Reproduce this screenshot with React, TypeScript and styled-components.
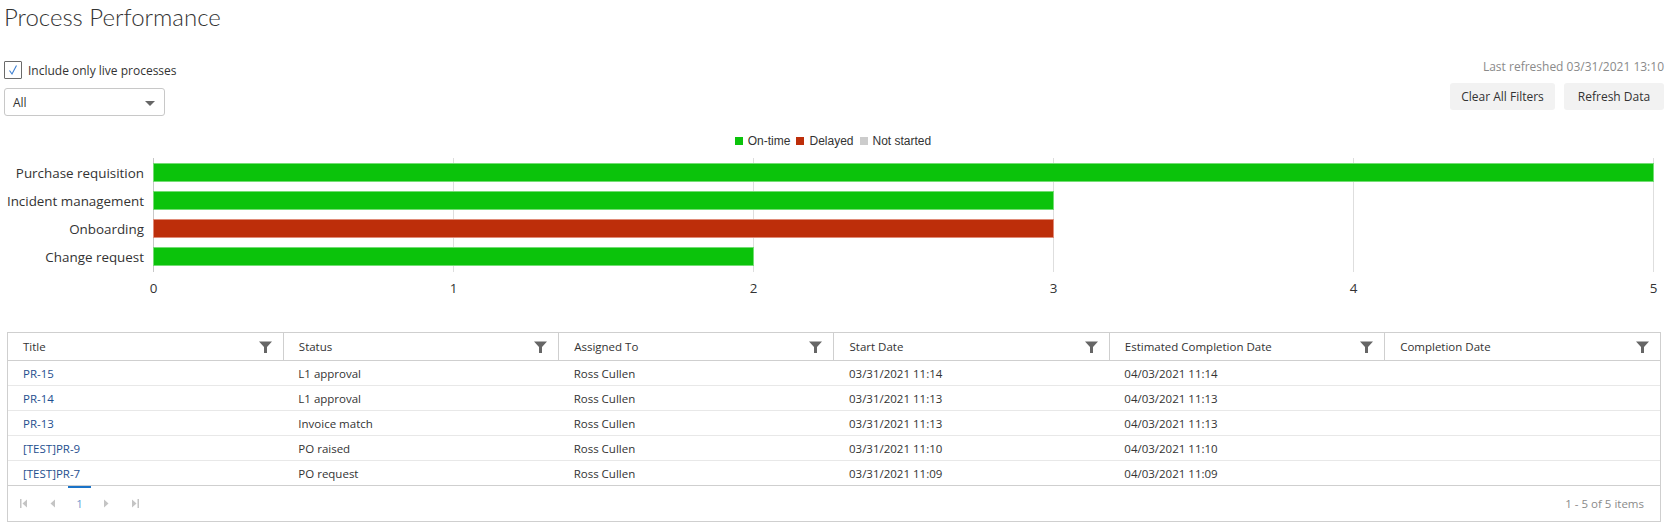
import styled, { createGlobalStyle } from 'styled-components';

const GlobalStyle = createGlobalStyle`
  body {
    margin: 0;
    background: #fff;
    font-family: "Segoe UI", "Open Sans", sans-serif;
    color: #333;
  }
`

const Page = styled.div`
  width: 1674px;
  box-sizing: border-box;
  padding: 0 10px 0 4px;
`

const Title = styled.h1`
  margin: 0;
  padding-top: 1px;
  font-family: "Lato", "Open Sans", sans-serif;
  font-weight: 300;
  font-size: 24px;
  line-height: 32px;
  color: #333;
  height: 33px;
`

const Toolbar = styled.div`
  display: flex;
  justify-content: space-between;
  margin-top: 26px;
`

const LeftControls = styled.div`
  display: flex;
  flex-direction: column;
  gap: 8px;
`

const CheckRow = styled.label`
  display: flex;
  align-items: center;
  gap: 6px;
  height: 20px;
  font-size: 12px;
  color: #333;
`

const CheckBox = styled.span`
  width: 16px;
  height: 16px;
  border: 1px solid #6a6a6a;
  border-radius: 1px;
  display: flex;
  align-items: center;
  justify-content: center;
`

const Select = styled.div`
  width: 161px;
  height: 28px;
  box-sizing: border-box;
  border: 1px solid #c8c8c8;
  border-radius: 3px;
  display: flex;
  align-items: center;
  justify-content: space-between;
  padding: 0 9px 0 8px;
  font-size: 12px;
  color: #333;
`

const Caret = styled.span`
  width: 0;
  height: 0;
  border-left: 5px solid transparent;
  border-right: 5px solid transparent;
  border-top: 5px solid #666;
  margin-top: 2px;
`

const RightControls = styled.div`
  display: flex;
  flex-direction: column;
  align-items: flex-end;
  margin-top: -1px;
`

const Refreshed = styled.div`
  font-size: 12px;
  line-height: 16px;
  color: #8a8a8a;
`

const ButtonRow = styled.div`
  display: flex;
  gap: 9px;
  margin-top: 8px;
`

const Button = styled.button<{ $width: number }>`
  width: ${p => p.$width}px;
  height: 27px;
  border: none;
  border-radius: 3px;
  background: #f2f2f2;
  font-family: "Segoe UI", "Open Sans", sans-serif;
  font-size: 12px;
  color: #333;
  padding: 0;
`

const ChartSection = styled.div`
  margin: 17px -10px 0 -4px;
`

const Legend = styled.div`
  display: flex;
  justify-content: center;
  gap: 6px;
  height: 16px;
  align-items: center;
  padding-right: 8px;
  font-family: "Liberation Sans", Arial, sans-serif;
  font-size: 12px;
  color: #333;
`

const LegendItem = styled.span`
  display: flex;
  align-items: center;
  gap: 5px;
`

const Swatch = styled.span<{ $color: string }>`
  width: 8px;
  height: 8px;
  background: ${p => p.$color};
`

const ChartSvg = styled.svg`
  display: block;
  margin-top: 1px;
  font-family: "Segoe UI", "Open Sans", sans-serif;
  font-size: 13.4px;

  text {
    fill: #333;
  }
`

const GridBox = styled.div`
  margin: 32px 3px 0 3px;
  border: 1px solid #cfcfcf;
`

const Table = styled.table`
  width: 100%;
  border-collapse: collapse;
  table-layout: fixed;
  font-size: 11.5px;
`

const HeadCell = styled.th`
  height: 27px;
  padding: 0 11px 0 15px;
  text-align: left;
  font-weight: 400;
  color: #333;
  border-bottom: 1px solid #cfcfcf;
  border-left: 1px solid #cfcfcf;

  &:first-child {
    border-left: none;
  }
`

const HeadInner = styled.div`
  display: flex;
  align-items: center;
  justify-content: space-between;
`

const Row = styled.tr`
  border-bottom: 1px solid #e8e8e8;

  &:last-child {
    border-bottom: 1px solid #cfcfcf;
  }
`

const Cell = styled.td<{ $link?: boolean }>`
  height: 24px;
  padding: 0 15px;
  color: ${p => (p.$link ? '#1f4f8f' : '#333')};
  white-space: nowrap;
`

const Footer = styled.div`
  height: 35px;
  display: flex;
  align-items: center;
  justify-content: space-between;
  padding: 0 16px 0 2px;
  font-size: 11.5px;
`

const Pager = styled.div`
  display: flex;
  align-items: center;
  height: 100%;
`

const PagerIcon = styled.span`
  width: 28px;
  display: flex;
  justify-content: center;
`

const PageNum = styled.span`
  position: relative;
  width: 27px;
  height: 100%;
  display: flex;
  align-items: center;
  justify-content: center;
  color: #6f9bd0;

  &::before {
    content: '';
    position: absolute;
    top: 0;
    left: 2px;
    right: 2px;
    height: 2px;
    background: #1a73c8;
  }
`

const ItemsInfo = styled.span`
  color: #8a8a8a;
`

const GREEN = '#0bc30b'
const RED = '#bd2e0a'

const bars = [
  { label: 'Purchase requisition', value: 5, color: GREEN, stroke: '#74dd74' },
  { label: 'Incident management', value: 3, color: GREEN, stroke: '#74dd74' },
  { label: 'Onboarding', value: 3, color: RED, stroke: '#e08b78' },
  { label: 'Change request', value: 2, color: GREEN, stroke: '#74dd74' },
]

const X0 = 153.5
const UNIT = 300

const columns = ['Title', 'Status', 'Assigned To', 'Start Date', 'Estimated Completion Date', 'Completion Date']

const rows = [
  ['PR-15', 'L1 approval', 'Ross Cullen', '03/31/2021 11:14', '04/03/2021 11:14', ''],
  ['PR-14', 'L1 approval', 'Ross Cullen', '03/31/2021 11:13', '04/03/2021 11:13', ''],
  ['PR-13', 'Invoice match', 'Ross Cullen', '03/31/2021 11:13', '04/03/2021 11:13', ''],
  ['[TEST]PR-9', 'PO raised', 'Ross Cullen', '03/31/2021 11:10', '04/03/2021 11:10', ''],
  ['[TEST]PR-7', 'PO request', 'Ross Cullen', '03/31/2021 11:09', '04/03/2021 11:09', ''],
]

const Funnel = () => (
  <svg width="13" height="12" viewBox="0 0 13 12">
    <path d="M0 0.5 H13 L8 6 V12 H5 V6 Z" fill="#666" />
  </svg>
)

const PageArrow = ({ dir, edge }: { dir: 'left' | 'right'; edge?: boolean }) => (
  <svg width="8" height="9" viewBox="0 0 8 9">
    {dir === 'left' ? (
      <>
        {edge && <rect x="0" y="0" width="1.5" height="9" fill="#c4c4c4" />}
        <path d="M7 0.5 V8.5 L2.5 4.5 Z" fill="#c4c4c4" />
      </>
    ) : (
      <>
        <path d="M1 0.5 V8.5 L5.5 4.5 Z" fill="#c4c4c4" />
        {edge && <rect x="6.5" y="0" width="1.5" height="9" fill="#c4c4c4" />}
      </>
    )}
  </svg>
)

const BarChart = () => (
  <ChartSvg width="1674" height="150" viewBox="0 0 1674 150">
    {[0, 1, 2, 3, 4, 5].map(i => (
      <line
        key={i}
        x1={X0 + i * UNIT}
        x2={X0 + i * UNIT}
        y1={8}
        y2={122}
        stroke={i === 0 ? '#c8c8c8' : '#dedede'}
        strokeWidth="1"
      />
    ))}
    {bars.map((b, i) => {
      const y = 13.5 + i * 28
      return (
        <g key={b.label}>
          <text x={144} y={y + 14} textAnchor="end">{b.label}</text>
          <rect x={X0} y={y} width={b.value * UNIT} height={18} fill={b.color} stroke={b.stroke} strokeWidth="1" />
        </g>
      )
    })}
    {[0, 1, 2, 3, 4, 5].map(i => (
      <text key={i} x={X0 + i * UNIT} y={143} textAnchor="middle">{i}</text>
    ))}
  </ChartSvg>
)

const App = () => {
  return (
    <Page>
      <GlobalStyle />
      <Title>Process Performance</Title>
      <Toolbar>
        <LeftControls>
          <CheckRow>
            <CheckBox>
              <svg width="12" height="12" viewBox="0 0 12 12">
                <path d="M2.5 6.5 L5 10 L9.5 1.5" fill="none" stroke="#3d7fd1" strokeWidth="1.1" />
              </svg>
            </CheckBox>
            Include only live processes
          </CheckRow>
          <Select>
            All
            <Caret />
          </Select>
        </LeftControls>
        <RightControls>
          <Refreshed>Last refreshed 03/31/2021 13:10</Refreshed>
          <ButtonRow>
            <Button $width={105}>Clear All Filters</Button>
            <Button $width={100}>Refresh Data</Button>
          </ButtonRow>
        </RightControls>
      </Toolbar>
      <ChartSection>
        <Legend>
          <LegendItem><Swatch $color={GREEN} />On-time</LegendItem>
          <LegendItem><Swatch $color={RED} />Delayed</LegendItem>
          <LegendItem><Swatch $color="#cccccc" />Not started</LegendItem>
        </Legend>
        <BarChart />
      </ChartSection>
      <GridBox>
        <Table>
          <thead>
            <tr>
              {columns.map(c => (
                <HeadCell key={c}>
                  <HeadInner>
                    {c}
                    <Funnel />
                  </HeadInner>
                </HeadCell>
              ))}
            </tr>
          </thead>
          <tbody>
            {rows.map(r => (
              <Row key={r[0]}>
                {r.map((v, i) => (
                  <Cell key={i} $link={i === 0}>{v}</Cell>
                ))}
              </Row>
            ))}
          </tbody>
        </Table>
        <Footer>
          <Pager>
            <PagerIcon><PageArrow dir="left" edge /></PagerIcon>
            <PagerIcon><PageArrow dir="left" /></PagerIcon>
            <PageNum>1</PageNum>
            <PagerIcon><PageArrow dir="right" /></PagerIcon>
            <PagerIcon><PageArrow dir="right" edge /></PagerIcon>
          </Pager>
          <ItemsInfo>1 - 5 of 5 items</ItemsInfo>
        </Footer>
      </GridBox>
    </Page>
  );
}

export default App;
